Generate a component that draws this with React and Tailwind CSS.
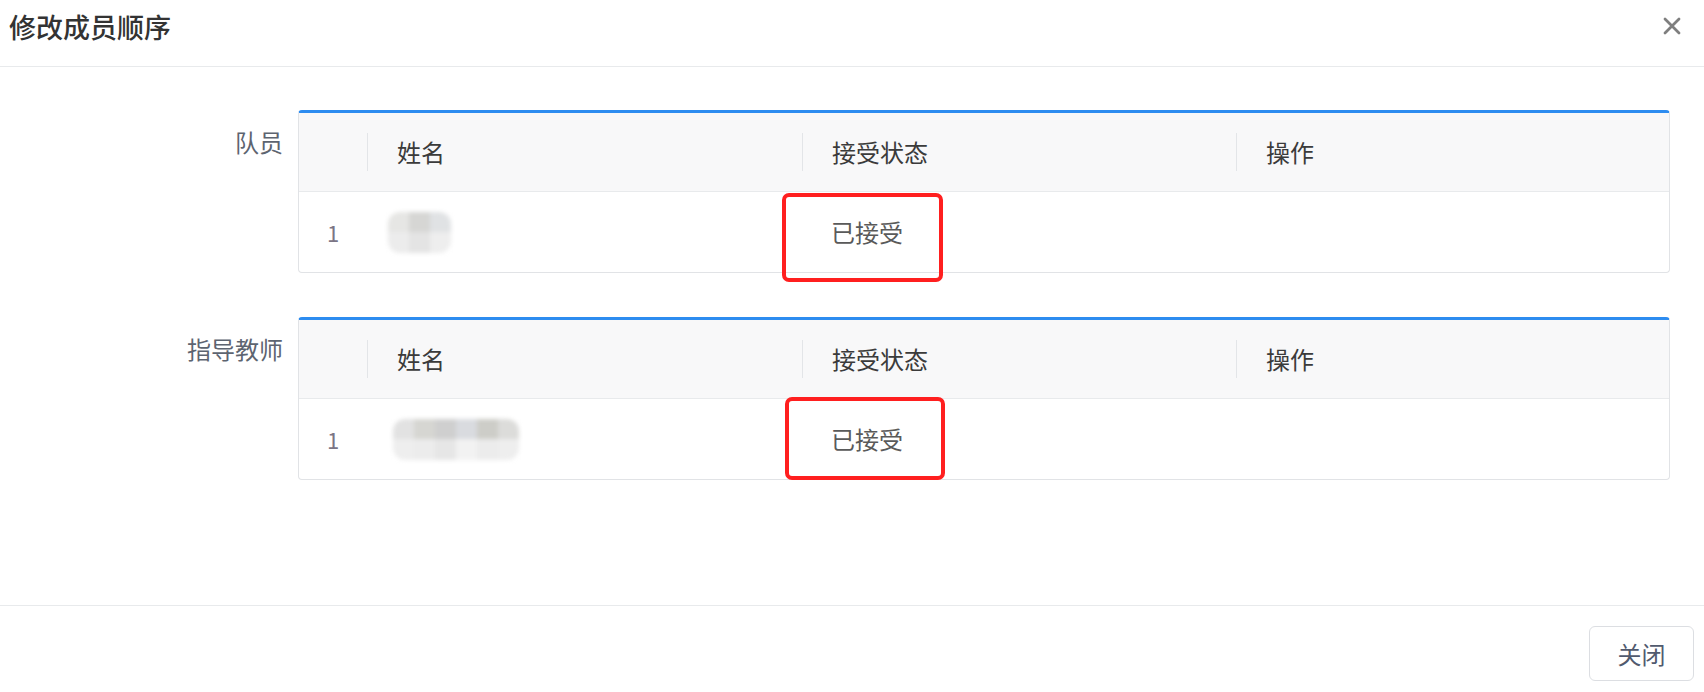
import React from "react";

const FONT = { fontFamily: '"Noto Sans CJK SC", "Noto Sans", sans-serif' };

function Blur({ top, bottom, w }) {
  return (
    <div className="flex flex-col blur-[2px] rounded-[12px] overflow-hidden">
      <div className="flex">
        {top.map((c, i) => (
          <div key={i} className={`${w} h-[20px]`} style={{ background: c }} />
        ))}
      </div>
      <div className="flex">
        {bottom.map((c, i) => (
          <div key={i} className={`${w} h-[21px]`} style={{ background: c }} />
        ))}
      </div>
    </div>
  );
}

function HeadCell({ children }) {
  return (
    <div className="flex items-center h-full">
      <span className="w-px h-[38px] bg-[#e3e5e8]" />
      <span className="ml-[29px] text-[24px] text-[#3b3b3b] leading-none">{children}</span>
    </div>
  );
}

function MemberTable({ name, box }) {
  return (
    <div className="w-[1372px] border border-[#e1e3e6] border-t-[3px] border-t-[#2d8cf0] rounded-[4px] bg-white">
      <div className="grid grid-cols-[68px_435px_434px_1fr] h-[79px] bg-[#f8f8f9] border-b border-[#e8eaec]">
        <div />
        <HeadCell>姓名</HeadCell>
        <HeadCell>接受状态</HeadCell>
        <HeadCell>操作</HeadCell>
      </div>
      <div className="grid grid-cols-[68px_435px_434px_1fr] h-[80px]">
        <div className="flex items-center justify-center text-[22px] text-[#7b7585]">1</div>
        <div className={`flex items-center ${name.pad}`}>
          <Blur top={name.top} bottom={name.bottom} w={name.w} />
        </div>
        <div className="relative flex items-center pl-[29px] text-[24px] text-[#5a5a5a]">
          已接受
          <div className={`absolute border-[4px] border-[#ff1f1f] rounded-[7px] ${box}`} />
        </div>
        <div />
      </div>
    </div>
  );
}

function FormItem({ label, children }) {
  return (
    <div className="flex">
      <div className="w-[298px] pr-[15px] pt-[14px] text-right text-[24px] leading-[36px] text-[#5d6470]">
        {label}
      </div>
      {children}
    </div>
  );
}

export default function App() {
  return (
    <div className="w-[1704px] h-[692px] bg-white flex flex-col" style={FONT}>
      <div className="h-[67px] border-b border-[#e8eaec] flex items-start justify-between pl-[9px] pr-[23px]">
        <div className="mt-[10px] text-[27px] leading-[34px] font-medium text-[#333333]">修改成员顺序</div>
        <svg className="mt-[17px]" width="18" height="18" viewBox="0 0 18 18">
          <path d="M2 2 L16 16 M16 2 L2 16" stroke="#7f7f7f" strokeWidth="2.8" strokeLinecap="round" />
        </svg>
      </div>
      <div className="flex-1 pt-[43px] flex flex-col gap-[44px]">
        <FormItem label="队员">
          <MemberTable
            name={{
              pad: "pl-[21px]",
              w: "w-[21px]",
              top: ["#e6e6e4", "#d6d6d4", "#e0e2e4"],
              bottom: ["#ececec", "#e4e4e4", "#eeeeee"],
            }}
            box="left-[-20px] top-[1px] w-[161px] h-[89px]"
          />
        </FormItem>
        <FormItem label="指导教师">
          <MemberTable
            name={{
              pad: "pl-[26px]",
              w: "w-[21px]",
              top: ["#e2e2e2", "#d6d6d2", "#cfcfcf", "#d9dbdf", "#cdcdc8", "#dcdcda"],
              bottom: ["#eeeeee", "#ececec", "#e6e6e6", "#f2f2f2", "#ececec", "#eeeeee"],
            }}
            box="left-[-17px] top-[-2px] w-[160px] h-[83px]"
          />
        </FormItem>
      </div>
      <div className="h-[87px] border-t border-[#e8eaec] flex justify-end items-start pt-[20px] pr-[10px]">
        <button className="w-[105px] h-[55px] border border-[#dcdee2] rounded-[6px] bg-white text-[24px] text-[#515a6e]">
          关闭
        </button>
      </div>
    </div>
  );
}
